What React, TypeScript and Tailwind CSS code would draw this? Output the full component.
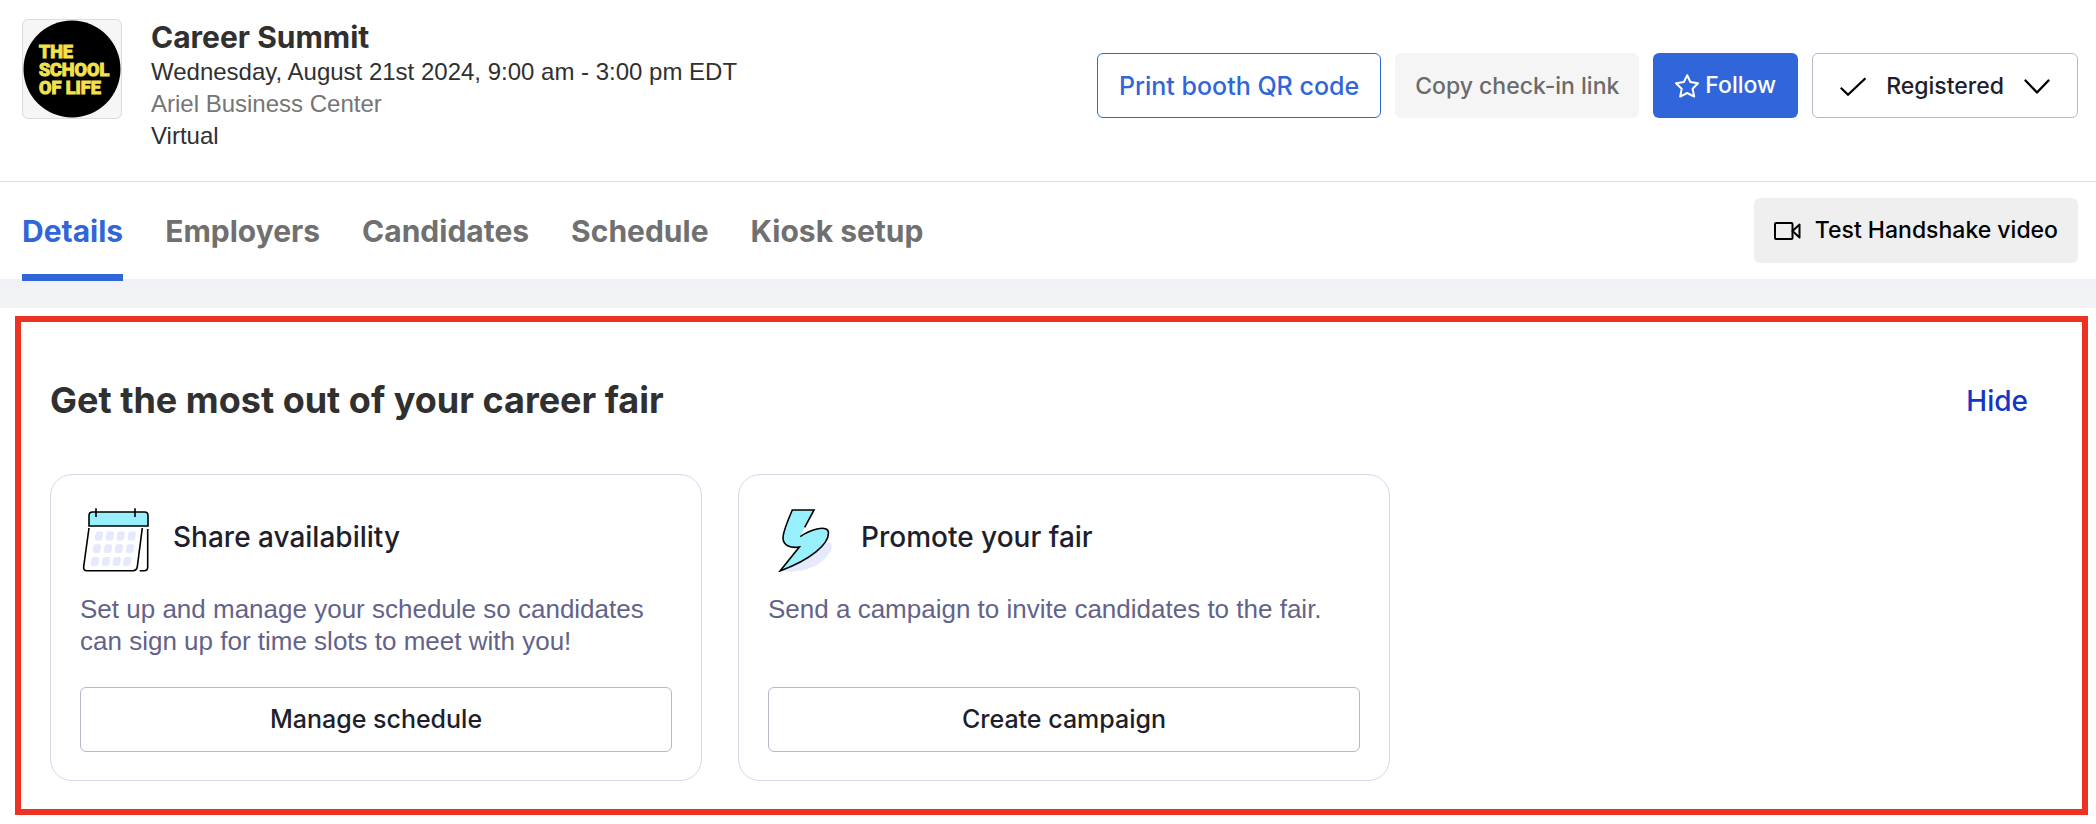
import React from "react";
import clsx from "clsx";

const tabs = ["Details", "Employers", "Candidates", "Schedule", "Kiosk setup"];

function SchoolLogo() {
  return (
    <svg viewBox="0 0 98 98" className="size-full" role="img" aria-label="The School of Life">
      <circle cx="49" cy="49" r="48.5" fill="#000" />
      <g
        fill="#f2e14c"
        stroke="#f2e14c"
        strokeWidth="1.2"
        fontFamily="Roboto, 'Liberation Sans', sans-serif"
        fontWeight="700"
        fontSize="18"
      >
        <text x="16" y="38">THE</text>
        <text x="16" y="56">SCHOOL</text>
        <text x="16" y="74">OF LIFE</text>
      </g>
    </svg>
  );
}

function StarIcon() {
  return (
    <svg viewBox="0 0 24 24" className="size-6" fill="none" stroke="currentColor" strokeWidth="2" strokeLinejoin="round">
      <path d="M12.2 1.2 15.4 8 23 9.3 17.6 14.7 19.2 22.6 12.2 19 5.2 22.6 6.7 14.7 1 9.3 8.9 8Z" />
    </svg>
  );
}

function CheckIcon() {
  return (
    <svg viewBox="0 0 26 20" className="h-5 w-[26px]" fill="none" stroke="#000" strokeWidth="2.2">
      <path d="M.8 10.8 8 17.8 25.4 1.2" />
    </svg>
  );
}

function ChevronIcon() {
  return (
    <svg viewBox="0 0 26 16" className="h-4 w-[26px]" fill="none" stroke="#000" strokeWidth="2.4" strokeLinecap="round" strokeLinejoin="round">
      <path d="M1.5 1.5 13 13.5 24.5 1.5" />
    </svg>
  );
}

function VideoIcon() {
  return (
    <svg viewBox="0 0 27 18" className="h-[18px] w-[27px]" fill="none" stroke="#000" strokeWidth="2" strokeLinejoin="round">
      <rect x="1" y="1" width="17.5" height="16" rx="1" />
      <path d="M18.5 9 25.5 2.6V15.4Z" />
    </svg>
  );
}

const cells = [
  { y: 34, xs: [19, 30, 40.7, 51.7] },
  { y: 46.7, xs: [16.8, 28, 38.8, 50] },
  { y: 59.3, xs: [15, 26, 36.7, 47.3] },
];

function CalendarArt() {
  return (
    <svg viewBox="0 0 70 70" className="size-[70px]" fill="none" stroke="#000" strokeWidth="1.6">
      <path d="M9 24V13.5Q9 10 12.5 10H64.5Q68 10 68 13.5V24Z" fill="#98f0fd" />
      <path d="M16 6.3V15M55 6.3V15" />
      <path d="M9 26 3.7 64.5Q3.2 68.7 7 68.7H53Q56.7 68.7 57.3 64.7L62.3 26" />
      <path d="M67.7 27V65Q67.7 68.7 64 68.7H59.7" />
      <g fill="#e6e9fc" stroke="none">
        {cells.map((row) =>
          row.xs.map((x) => (
            <rect key={`${row.y}-${x}`} x="-3.8" y="-4.4" width="7.6" height="8.8" rx="2" transform={`translate(${x} ${row.y}) skewX(-8)`} />
          ))
        )}
      </g>
    </svg>
  );
}

function BoltArt() {
  return (
    <svg viewBox="0 0 70 70" className="size-[70px]" fill="none">
      <path d="M12 69C26 71 43 68 53 60C62 53 66 44 62.5 41C58 38 40 50 12 69Z" fill="#e6e9fc" />
      <path d="M24.3 8H46L36.7 25.3 32.3 34.7C42 27.5 60.5 22 60.5 31C60.5 42 44 57 12 69L31.3 45C22 46.5 15 43 15 36C15 30 20 18 24.3 8Z" fill="#98f0fd" />
      <path
        d="M36.7 25.3 46 8H24.3C20 18 15 30 15 36C15 43 22 46.5 31.3 45L12 69C44 57 60.5 42 60.5 31C60.5 22 42 27.5 32.3 34.7"
        stroke="#000"
        strokeWidth="1.6"
      />
    </svg>
  );
}

const cards = [
  {
    title: "Share availability",
    text: "Set up and manage your schedule so candidates can sign up for time slots to meet with you!",
    action: "Manage schedule",
    art: <CalendarArt />,
  },
  {
    title: "Promote your fair",
    text: "Send a campaign to invite candidates to the fair.",
    action: "Create campaign",
    art: <BoltArt />,
  },
];

export default function App() {
  return (
    <div className="bg-white font-['Inter','Liberation_Sans',sans-serif] text-[#303030]">
      <header className="flex items-center justify-between border-b border-[#dedede] pt-[19px] pr-[18px] pb-[29px] pl-[22px]">
        <div className="flex gap-[29px]">
          <div className="size-[100px] shrink-0 rounded-md border border-[#dcdcdc] bg-[#f6f6f6]">
            <SchoolLogo />
          </div>
          <div className="font-['Liberation_Sans',sans-serif] text-[24px] leading-8">
            <h1 className="font-['Inter',sans-serif] text-[30px] leading-[37px] font-bold">Career Summit</h1>
            <p>Wednesday, August 21st 2024, 9:00 am - 3:00 pm EDT</p>
            <p className="text-[#757575]">Ariel Business Center</p>
            <p>Virtual</p>
          </div>
        </div>
        <div className="flex gap-[14px] whitespace-nowrap">
          <button className="h-[65px] rounded-md border border-[#3066d9] px-[21px] pt-0.5 text-[25px] font-medium text-[#3066d9]">
            Print booth QR code
          </button>
          <button className="h-[65px] rounded-md bg-[#f5f5f5] px-5 pt-0.5 text-[23px] font-medium text-[#6b6b6b]">
            Copy check-in link
          </button>
          <button className="flex h-[65px] items-center gap-[6px] rounded-md bg-[#3066d9] px-[22px] text-[23px] font-medium text-white">
            <StarIcon />
            Follow
          </button>
          <button className="flex h-[65px] items-center gap-5 rounded-md border border-[#b8b8cc] px-[27px] pt-0.5 text-[23px] font-medium text-[#1e1e2c]">
            <CheckIcon />
            Registered
            <ChevronIcon />
          </button>
        </div>
      </header>

      <div className="flex h-[97px] items-center justify-between pr-[18px] pl-[22px]">
        <nav className="relative z-10 -mb-[2px] flex gap-[42px]">
          {tabs.map((tab, i) => (
            <a
              key={tab}
              href="#"
              className={clsx(
                "flex h-[99px] items-center border-y-[7px] border-transparent text-[30px] font-bold",
                i === 0 ? "border-b-[#3066d9] text-[#3066d9]" : "text-[#707070]"
              )}
            >
              {tab}
            </a>
          ))}
        </nav>
        <button className="flex h-[65px] items-center gap-[14px] rounded-md bg-[#efefef] px-5 text-[23px] font-medium text-black">
          <VideoIcon />
          Test Handshake video
        </button>
      </div>

      <div className="h-[29px] bg-linear-to-b from-[#eff1f5] to-[#f4f4f6]" />

      <main className="pt-2 pr-2 pb-2 pl-[15px]">
        <section className="border-[6px] border-[#ec3323] pt-[54px] pr-1 pb-7 pl-[29px]">
          <div className="flex items-center justify-between">
            <h2 className="text-[36px] leading-[48px] font-bold">Get the most out of your career fair</h2>
            <button className="px-[50px] pt-0.5 text-[28px] font-medium text-[#1436c4]">Hide</button>
          </div>
          <div className="mt-[50px] grid grid-cols-3 gap-9">
            {cards.map((card) => (
              <article key={card.title} className="flex flex-col rounded-[22px] border border-[#d7d7ea] px-[29px] pt-[27px] pb-7">
                <div className="flex items-center gap-[23px]">
                  {card.art}
                  <h3 className="text-[28px] font-medium text-[#1e1e2c]">{card.title}</h3>
                </div>
                <p className="mt-[21px] mb-[30px] font-['Liberation_Sans',sans-serif] text-[26px] leading-8 text-[#63638a]">{card.text}</p>
                <button className="mt-auto h-[65px] rounded-md border border-[#b8b8cc] text-[25px] font-medium text-[#1e1e2c]">
                  {card.action}
                </button>
              </article>
            ))}
          </div>
        </section>
      </main>
    </div>
  );
}
